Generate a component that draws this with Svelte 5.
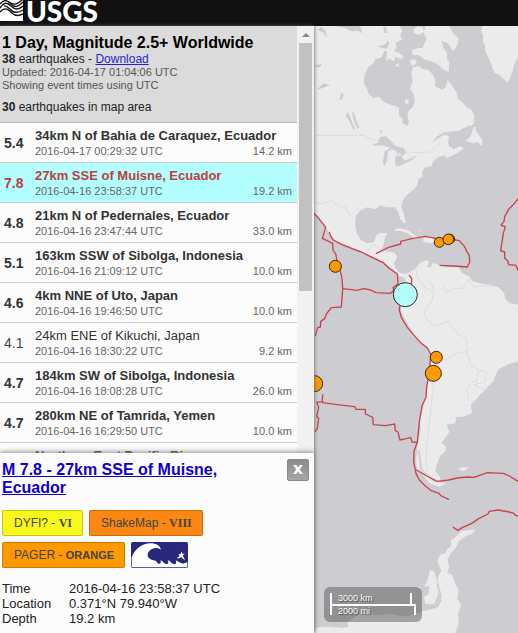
<script>
  const quakes = [
    { mag: '5.4', place: '34km N of Bahia de Caraquez, Ecuador', time: '2016-04-17 00:29:32 UTC', depth: '14.2 km', big: true },
    { mag: '7.8', place: '27km SSE of Muisne, Ecuador', time: '2016-04-16 23:58:37 UTC', depth: '19.2 km', big: true, selected: true },
    { mag: '4.8', place: '21km N of Pedernales, Ecuador', time: '2016-04-16 23:47:44 UTC', depth: '33.0 km', big: true },
    { mag: '5.1', place: '163km SSW of Sibolga, Indonesia', time: '2016-04-16 21:09:12 UTC', depth: '10.0 km', big: true },
    { mag: '4.6', place: '4km NNE of Uto, Japan', time: '2016-04-16 19:46:50 UTC', depth: '10.0 km', big: true },
    { mag: '4.1', place: '24km ENE of Kikuchi, Japan', time: '2016-04-16 18:30:22 UTC', depth: '9.2 km', big: false },
    { mag: '4.7', place: '184km SW of Sibolga, Indonesia', time: '2016-04-16 18:08:28 UTC', depth: '26.0 km', big: true },
    { mag: '4.7', place: '280km NE of Tamrida, Yemen', time: '2016-04-16 16:29:50 UTC', depth: '10.0 km', big: true },
    { mag: '', place: 'Northern East Pacific Rise', time: '', depth: '', big: true }
  ];

  const markers = [
    { x: 70, y: 739, r: 18 },
    { x: 414, y: 657, r: 14 },
    { x: 382, y: 667, r: 15 },
    { x: 409, y: 658, r: 16 },
    { x: 373, y: 1012, r: 18 },
    { x: 364, y: 1060, r: 24 },
    { x: 8, y: 1091, r: 24 },
    { x: 280, y: 824, r: 36, selected: true }
  ];
</script>

<div class="app">
  <header>
    <a class="logo" href="#home" aria-label="USGS home">
      <svg class="waves" width="23" height="32" viewBox="0 0 23 32" aria-hidden="true">
        <rect width="23" height="32" fill="#fff" />
        <g fill="none" stroke="#111" stroke-width="1.4">
          <path d="M0 15C4 10 7 11 11 15S18 18 23 13" />
          <path d="M0 19C4 13 7 13 11 17S18 21 23 17" />
          <path d="M4 17C8 16 10 22 14 23S20 23 23 21" />
          <path d="M0 23C5 17 9 21 12 24S19 27 23 25" />
          <path d="M9 13C14 17 18 15 23 10" />
        </g>
      </svg>
      <span>USGS</span>
    </a>
  </header>

  <main>
    <aside>
      <div class="scroller">
        <div class="content">
          <section class="summary">
            <h1>1 Day, Magnitude 2.5+ Worldwide</h1>
            <p class="count"><b>38</b> earthquakes - <a href="#download">Download</a></p>
            <p class="note">Updated: 2016-04-17 01:04:06 UTC</p>
            <p class="note">Showing event times using UTC</p>
            <p class="area"><b>30</b> earthquakes in map area</p>
          </section>
          <ol>
            {#each quakes as q}
              <li class:big={q.big} class:selected={q.selected}>
                <span class="mag">{q.mag}</span>
                <div class="info">
                  <span class="place">{q.place}</span>
                  <div class="meta"><span>{q.time}</span><span>{q.depth}</span></div>
                </div>
              </li>
            {/each}
          </ol>
        </div>
        <div class="track" aria-hidden="true">
          <i class="arrow"></i>
          <i class="thumb"></i>
        </div>
      </div>

      <section class="detail">
        <div class="top">
          <h2><a href="#event">M 7.8 - 27km SSE of Muisne, Ecuador</a></h2>
          <button type="button" aria-label="Close">x</button>
        </div>
        <div class="badges">
          <a class="badge yellow" href="#dyfi">DYFI? - <b class="roman">VI</b></a>
          <a class="badge deep" href="#shakemap">ShakeMap - <b class="roman">VIII</b></a>
          <a class="badge orange" href="#pager">PAGER - <b>ORANGE</b></a>
          <a class="tsunami" href="#tsunami" aria-label="Tsunami information">
            <svg width="57" height="26" viewBox="0 0 171 78" aria-hidden="true">
              <rect width="171" height="78" rx="5" fill="#28287c" />
              <path d="M2 76V46C12 20 34 4 58 4C76 4 88 12 90 23C80 15 62 17 53 29C44 43 55 54 74 56C78 60 80 65 84 66C91 65 90 59 88 55C96 57 99 66 106 67C113 66 113 60 110 55C119 57 122 66 130 67C137 66 136 59 134 55C143 58 148 64 155 65L169 61V76Z" fill="#fff" />
              <path d="M151 28L154 35L162 35L155 40L159 48L162 55L156 50L151 45L145 49L137 49L146 42L142 36L149 37Z" fill="#fff" />
            </svg>
          </a>
        </div>
        <dl>
          <dt>Time</dt><dd>2016-04-16 23:58:37 UTC</dd>
          <dt>Location</dt><dd>0.371°N 79.940°W</dd>
          <dt>Depth</dt><dd>19.2 km</dd>
        </dl>
      </section>
    </aside>

    <section class="map" aria-label="Earthquake map">
      <svg class="world" viewBox="6 18 612 1821" preserveAspectRatio="xMinYMin slice" aria-hidden="true">
        <g fill="#ebebeb">
          <path d="M0 18H262L271 32L264 46L270 58L250 70L255 82L246 92L262 98L276 112L266 118L250 110L246 124L232 116L222 122L226 98L218 90L210 112L190 118L186 128L168 142L157 168L155 190L164 204L170 222L184 234L200 230L216 246L240 256L262 262L260 286L272 296L270 308L286 318L291 308L286 286L290 272L302 262L308 244L304 220L294 206L302 186L298 160L303 142L318 138L334 148L350 150L364 166L370 180L368 198L390 210L402 200L406 180L416 190L426 206L434 218L438 238L450 246L464 262L480 270L487 290L485 312L470 322L452 332L420 334L394 338L374 350L358 370L380 354L396 344L414 348L408 364L412 380L428 386L444 378L456 386L430 402L406 414L398 406L378 412L362 426L360 438L340 442L330 456L332 470L320 476L316 494L306 508L290 520L274 538L268 558L275 580L282 608L276 610L264 596L258 574L248 562L224 562L204 556L190 568L166 562L144 572L132 588L129 614L134 640L146 660L166 670L186 666L194 644L206 638L226 640L218 656L214 676L206 690L226 694L248 698L256 712L246 728L250 744L264 758L284 762L300 752L314 742L322 730L344 720L352 728L344 740L356 742L362 728L378 734L400 742L440 742L450 758L472 770L480 782L504 790L534 794L560 802L576 818L580 836L594 850L618 854V1024L592 1032L560 1048L548 1070L544 1084L522 1106L504 1124L488 1144L476 1156L480 1180L454 1190L432 1192L430 1210L404 1214L412 1236L388 1270L402 1278L400 1294L384 1308L374 1336L370 1354L384 1370L386 1388L404 1390L382 1400L352 1390L332 1364L316 1350L312 1328L316 1280L326 1230L324 1200L334 1160L344 1110L356 1040L356 1002L340 976L316 960L300 932L282 904L268 876L264 842L272 816L284 796L278 774L262 768L240 744L216 728L188 712L150 696L112 678L74 664L54 648L46 628L30 606L22 590L6 576H0Z" />
          <path d="M510 18L508 34L514 48L512 62L520 78L518 90L530 114L540 140L548 158L562 164L578 180L588 187L594 174L600 158L608 130L618 112V18Z" />
          <path d="M340 18H410L424 40L440 56L436 74L424 94L406 68L388 64L394 84L406 100L404 116L412 126L410 156L392 148L376 132L358 124L336 118L318 104L304 106L298 92L318 84L332 84L344 56L334 40Z" />
          <path d="M466 360L478 344L484 322L490 318L492 334L506 352L512 364L508 378L498 366L482 370L460 362Z" />
          <path d="M305 28L318 18L332 22L336 36L320 44L306 40ZM292 122L308 116L314 130L300 138ZM248 136L260 130L262 142ZM278 240L290 238L290 250L280 252ZM448 280L470 276L454 288Z" />
          <path d="M242 634L258 624L288 630L306 644L322 654L310 656L284 638L262 632ZM334 652L358 650L370 664L356 670L334 666ZM270 598L274 598L276 606ZM322 628L326 632L322 636Z" />
          <path d="M438 1348L450 1342L470 1342L456 1354Z" />
          <path d="M492 1528L480 1542L462 1548L440 1564L430 1586L416 1600L406 1620L412 1640L406 1658L420 1664L430 1692L440 1710L436 1738L448 1756L438 1782L440 1810L430 1840H0V1824L36 1820L56 1820L90 1824L110 1820L106 1804L110 1780L160 1774L220 1774L290 1776L340 1772L378 1762L388 1744L386 1718L378 1698L378 1668L388 1652L376 1624L384 1604L400 1600L404 1588L418 1578L416 1562L434 1548L448 1534L470 1530Z" />
          <path d="M354 1650L366 1654L378 1690L378 1726L366 1752L340 1752L336 1730L350 1722L352 1698L336 1700L346 1684ZM316 1702L326 1698L324 1706Z" />
        </g>
        <g fill="#cdcdd1">
          <path d="M178 374L198 368L204 352L222 348L240 366L250 378L276 384L282 400L272 408L262 398L254 406L256 396L240 388L228 394L226 420L218 438L212 430L218 394L236 384L210 376L190 378Z" />
          <path d="M250 408L268 406L276 422L292 416L316 406L300 420L262 438L250 436ZM104 278L110 280L120 306L130 328L124 328L110 300L102 290ZM120 276L126 278L132 298L142 322L136 326L124 298ZM82 238L88 220L96 222L90 240ZM14 210L34 190L54 196L32 204ZM8 136L30 132L24 142L8 142ZM410 340L440 332L474 314L462 346L450 354L444 376L424 388L412 374ZM202 334L210 328L208 342Z" />
          <path d="M66 18H144L152 40L138 32L120 34L96 24ZM26 20L42 34L44 54L34 38L18 30ZM214 20L222 20L226 40L216 38ZM196 80L222 72L226 60L232 70L224 86Z" />
        </g>
        <path d="M50 1770L84 1760L120 1772L150 1752L200 1748L224 1760L262 1754L276 1768L300 1756L330 1776L280 1790L240 1782L190 1786L150 1776L110 1804L60 1806L30 1790Z" fill="#c6c6c9" />
        <g fill="none" stroke="#d5d5d8" stroke-width="2">
          <path d="M6 346H154L174 356L198 362M284 396L324 398L354 396L372 382L384 366M6 546L30 552L60 542L80 560L100 560L114 586L130 594" />
          <path d="M310 744L318 776L336 800L366 816L360 842L336 878L344 900L372 918L410 904L434 940L464 956L466 994L436 1000L400 1020L382 1004M366 816L362 798L350 782M396 796L400 816L430 806L454 804L470 776M464 994L476 1036L500 1050L494 1082L476 1090L466 1110L470 1144M500 1050L524 1056L518 1086L486 1094M376 1006L364 1100L356 1170L348 1240L342 1310L346 1356M470 780L486 800L520 796L546 800M166 694L184 672L210 694L232 698" />
          <path d="M486 1092L520 1112L500 1144L476 1144" />
        </g>
        <path d="M276 900L296 944L326 968M320 1290L328 1350L370 1386M376 1690L386 1730L376 1752L350 1758" fill="none" stroke="#d2d2d3" stroke-width="7" />
        <g fill="none" stroke="#c8434f" stroke-width="4" stroke-linejoin="round" stroke-linecap="round">
          <path d="M6 580L20 596L32 610L41 622L31 655L62 670L63 690L72 704L74 718L80 730L90 775L92 806L88 861L58 863L43 882L38 896L26 904L25 921L17 923L10 946" />
          <path d="M52 637L57 650L64 660L90 674L120 686L148 696L180 712L214 728L230 744L256 762L258 792L244 802L244 814L234 820L192 818L176 810L156 806L134 811L112 808L92 806M292 766L299 776L298 800L306 806M262 808L256 822" />
          <path d="M193 700L214 690L230 682L266 672V664L300 656L340 649L372 655L410 656L442 662L458 680L464 694L472 706L473 726L466 741L426 738L384 736" />
          <path d="M618 536L602 556L590 568L578 590L576 604L567 616L580 620L574 640L566 692L578 696V714L588 724L590 734L612 736L618 752" />
          <path d="M264 852L262 870L268 892L286 922L304 944L326 968L346 984L356 1002L352 1060L344 1100L342 1132L330 1158L322 1206L316 1266L306 1294L305 1324L312 1360L322 1380L340 1398L358 1412L380 1420L388 1428L410 1438" />
          <path d="M314 1350L344 1368L376 1384L410 1380L436 1374L466 1371L486 1372L526 1358L574 1360L592 1368L618 1384M314 1267L300 1266L296 1252L282 1256L264 1260L258 1236L250 1232L248 1212L220 1217L184 1214L182 1192L160 1182V1168L132 1168L128 1160L76 1154L32 1148L31 1140L32 1124M30 1145L14 1147L20 1162L14 1190L20 1194L16 1226L10 1234" />
          <path d="M424 1522L438 1531L452 1522L478 1511L500 1496L528 1482L532 1474L558 1470L592 1476L606 1480L610 1486L618 1488" />
        </g>
        <g stroke="#2f2a1a" stroke-width="3">
          {#each markers as m}
            <circle cx={m.x} cy={m.y} r={m.r} fill={m.selected ? '#b3ffff' : '#ff9900'} />
          {/each}
        </g>
      </svg>
      <div class="scale">
        <span class="km">3000 km</span>
        <span class="mi">2000 mi</span>
      </div>
    </section>
  </main>
</div>

<style>
  :global(body) { margin: 0; }
  .app {
    display: flex;
    flex-direction: column;
    height: 100vh;
    overflow: hidden;
    font-family: "Liberation Sans", Arial, sans-serif;
    font-size: 13px;
    color: #222;
    background: #fcfcfc;
  }
  h1, h2, p, ol, dl, dd { margin: 0; padding: 0; }
  header {
    flex: none;
    display: flex;
    align-items: flex-end;
    height: 26px;
    box-sizing: border-box;
    padding-bottom: 5px;
    background: #111;
    overflow: hidden;
  }
  .logo {
    display: flex;
    align-items: flex-end;
    gap: 3px;
    color: #fff;
    text-decoration: none;
    font: 900 28px/20px Lato, "Liberation Sans", sans-serif;
  }
  .waves { display: block; }
  main { flex: 1; display: flex; min-height: 0; }
  aside {
    z-index: 1;
    flex: none;
    display: flex;
    flex-direction: column;
    width: 314px;
    background: #fcfcfc;
    box-shadow: 0 0 4px #555;
  }
  .scroller { flex: 1; display: flex; min-height: 0; overflow: hidden; }
  .content { flex: 1; min-width: 0; }
  .summary {
    padding: 8px 2px;
    background: #dbdbdb;
    border-bottom: 1px solid #bbb;
  }
  h1 { font-size: 16px; line-height: 18px; color: #000; }
  .count { font-size: 12px; line-height: 14px; }
  .note { font-size: 11px; line-height: 13px; color: #555; }
  .area { padding-top: 8px; font-size: 12px; line-height: 14px; }
  a { color: #2a1fd0; }
  ol { list-style: none; }
  li {
    display: flex;
    align-items: center;
    height: 39px;
    padding: 0 5px 0 4px;
    border-bottom: 1px solid #ccc;
    color: #333;
  }
  .mag { flex: none; width: 31px; font-size: 14px; color: #444; }
  .info { flex: 1; min-width: 0; }
  .place { display: block; font-size: 13px; line-height: 17px; }
  .big .mag, .big .place { font-weight: bold; color: #333; }
  .meta {
    display: flex;
    justify-content: space-between;
    min-height: 15px;
    font-size: 11px;
    line-height: 15px;
    color: #666;
  }
  .selected { background: #b3ffff; }
  .selected .mag, .selected .place { color: #b94040; }
  .track {
    flex: none;
    display: flex;
    flex-direction: column;
    align-items: center;
    width: 17px;
    background: #f1f1f1;
  }
  .arrow {
    margin: 7px 0 6px;
    border: 4px solid transparent;
    border-top-width: 0;
    border-bottom-color: #888;
  }
  .thumb { flex: none; width: 13px; height: 248px; background: #c1c1c1; }
  .detail {
    position: relative;
    flex: none;
    padding: 6px 5px 7px 2px;
    background: #fcfcfc;
    box-shadow: 0 -1px 5px #888;
  }
  .top { display: flex; justify-content: space-between; align-items: flex-start; gap: 32px; }
  h2 { padding-top: 2px; font-size: 16px; line-height: 18px; }
  .detail h2 a { color: #1100c8; }
  button {
    flex: none;
    width: 22px;
    height: 22px;
    padding: 0 0 3px;
    border: 1px solid #888;
    border-radius: 2px;
    background: linear-gradient(#8c8c8c, #a6a6a6);
    color: #fff;
    font: bold 16px/16px "DejaVu Sans", sans-serif;
  }
  .badges { display: flex; flex-wrap: wrap; gap: 6px; padding-top: 13px; }
  .detail .badge {
    box-sizing: border-box;
    height: 26px;
    padding: 0 10px 0 11px;
    border: 1px solid rgba(0, 0, 0, 0.2);
    border-radius: 2px;
    color: #444;
    font-size: 12px;
    line-height: 24px;
    text-decoration: none;
  }
  .badge b { font-size: 11px; }
  .badge .roman { font-family: "Liberation Serif", "Times New Roman", serif; font-size: 12px; }
  .yellow { background: #f8f81a; }
  .deep { background: #fb8813; }
  .orange { background: #ff9900; }
  .tsunami { height: 26px; }
  .tsunami svg { display: block; }
  dl {
    display: grid;
    grid-template-columns: 67px 1fr;
    padding-top: 13px;
    font-size: 13px;
    line-height: 15px;
  }
  .map { position: relative; flex: 1; min-width: 0; overflow: hidden; background: #cdcdd1; }
  .world { display: block; width: 100%; height: 100%; }
  .scale {
    position: absolute;
    left: 10px;
    bottom: 11px;
    box-sizing: border-box;
    width: 98px;
    height: 35px;
    padding: 6px;
    border-radius: 6px;
    background: rgba(90, 90, 90, 0.5);
    color: #fff;
    font-size: 9px;
    text-shadow: 1px 1px 1px #444;
  }
  .scale span {
    display: block;
    box-sizing: border-box;
    height: 11px;
    padding-left: 6px;
    border: 2px solid #fff;
    line-height: 10px;
  }
  .scale .km { width: 82px; border-top: 0; height: 13px; }
  .scale .mi { width: 86px; border-bottom: 0; margin-top: -2px; }
</style>
